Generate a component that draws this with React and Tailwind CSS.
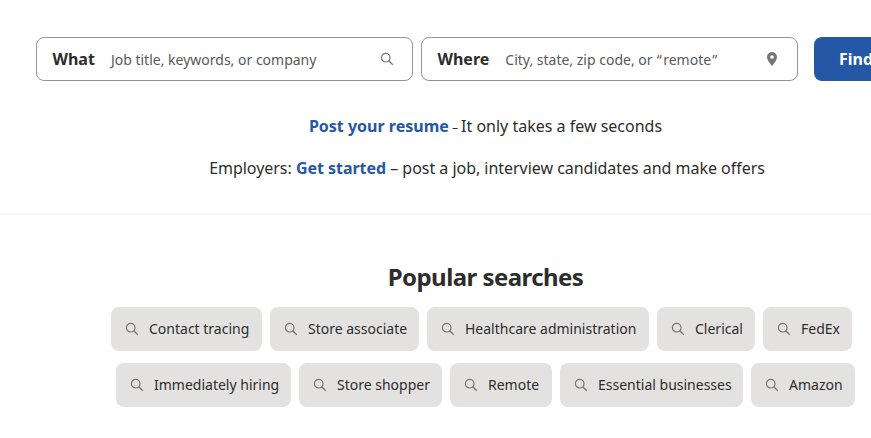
const SEARCH_ROWS = [
  [
    { label: "Contact tracing", width: "w-[151px]" },
    { label: "Store associate", width: "w-[149px]" },
    { label: "Healthcare administration", width: "w-[222px]" },
    { label: "Clerical", width: "w-[98px]" },
    { label: "FedEx", width: "w-[89px]" },
  ],
  [
    { label: "Immediately hiring", width: "w-[175px]" },
    { label: "Store shopper", width: "w-[143px]" },
    { label: "Remote", width: "w-[102px]" },
    { label: "Essential businesses", width: "w-[183px]" },
    { label: "Amazon", width: "w-[104px]" },
  ],
]

function SearchIcon({ className }) {
  return (
    <svg viewBox="0 0 14 14" fill="none" stroke="currentColor" className={className}>
      <circle cx="5.7" cy="5.7" r="4.3" strokeWidth="1.2" />
      <path d="M8.7 8.7L12.800 12.800" strokeWidth="1.3" />
    </svg>
  )
}

function PinIcon({ className }) {
  return (
    <svg viewBox="0 0 10 14" fill="currentColor" className={className}>
      <path fillRule="evenodd" d="M5 0a5 5 0 0 0-5 5c0 3.6 5 9 5 9s5-5.400 5-9a5 5 0 0 0-5-5zm0 6.800a1.800 1.800 0 1 1 0-3.600 1.800 1.800 0 0 1 0 3.600z" />
    </svg>
  )
}

function SearchField({ label, placeholder, icon }) {
  return (
    <div className="flex h-11 w-[377px] shrink-0 items-center rounded-lg border border-[#949494] bg-white pr-[18px] pl-[15.500px]">
      <span className="mr-4 font-bold">{label}</span>
      <span className="flex-1 pt-[2px] text-sm whitespace-nowrap text-[#595959]">{placeholder}</span>
      {icon}
    </div>
  )
}

export default function App() {
  return (
    <div className="h-[438px] overflow-hidden bg-white font-['Noto_Sans',sans-serif] text-base text-[#2d2d2d]">
      <form className="flex pt-[37px] pl-9">
        <SearchField
          label="What"
          placeholder="Job title, keywords, or company"
          icon={<SearchIcon className="h-[14px] w-[14px] text-[#767676]" />}
        />
        <div className="ml-2">
          <SearchField
            label="Where"
            placeholder={
              <>
                City, state, zip code, or <span className="pl-[0.500px] tracking-[1.500px]">“</span>remote
                <span className="pl-[1px] tracking-[1px]">”</span>
              </>
            }
            icon={<PinIcon className="mr-[2px] h-[14px] w-[10px] text-[#767676]" />}
          />
        </div>
        <button type="button" className="ml-4 h-11 w-[124px] shrink-0 rounded-lg bg-[#2557a7] pr-[3px] font-bold text-white">
          Find jobs
        </button>
      </form>

      <div className="mt-[33px] flex flex-col gap-[18px] border-b-2 border-[#f7f7f7] pb-[33px] text-center leading-6">
        <p className="pl-[100px]">
          <a href="#" className="font-bold text-[#2557a7]">Post your resume</a>
          <span className="text-xs"> – </span>It only takes a few seconds
        </p>
        <p className="pl-[103px] tracking-[-0.030px]">
          Employers: <a href="#" className="font-bold text-[#2557a7]">Get started</a> – post a job, interview candidates and make offers
        </p>
      </div>

      <section className="mt-[46px]">
        <h2 className="pl-[100px] text-center text-2xl font-bold tracking-[-0.560px]">Popular searches</h2>
        <div className="mt-[14px] flex flex-col gap-3 text-sm">
          {SEARCH_ROWS.map((row, i) => (
            <div key={i} className={i === 0 ? "flex gap-2 pl-[111px]" : "flex gap-2 pl-[116px]"}>
              {row.map(({ label, width }) => (
                <a
                  key={label}
                  href="#"
                  className={`${width} flex h-11 shrink-0 items-center rounded-lg bg-[#e4e2e0] pl-[14px] whitespace-nowrap`}
                >
                  <SearchIcon className="mr-[10px] h-[14px] w-[14px] text-[#767676]" />
                  {label}
                </a>
              ))}
            </div>
          ))}
        </div>
      </section>
    </div>
  )
}
